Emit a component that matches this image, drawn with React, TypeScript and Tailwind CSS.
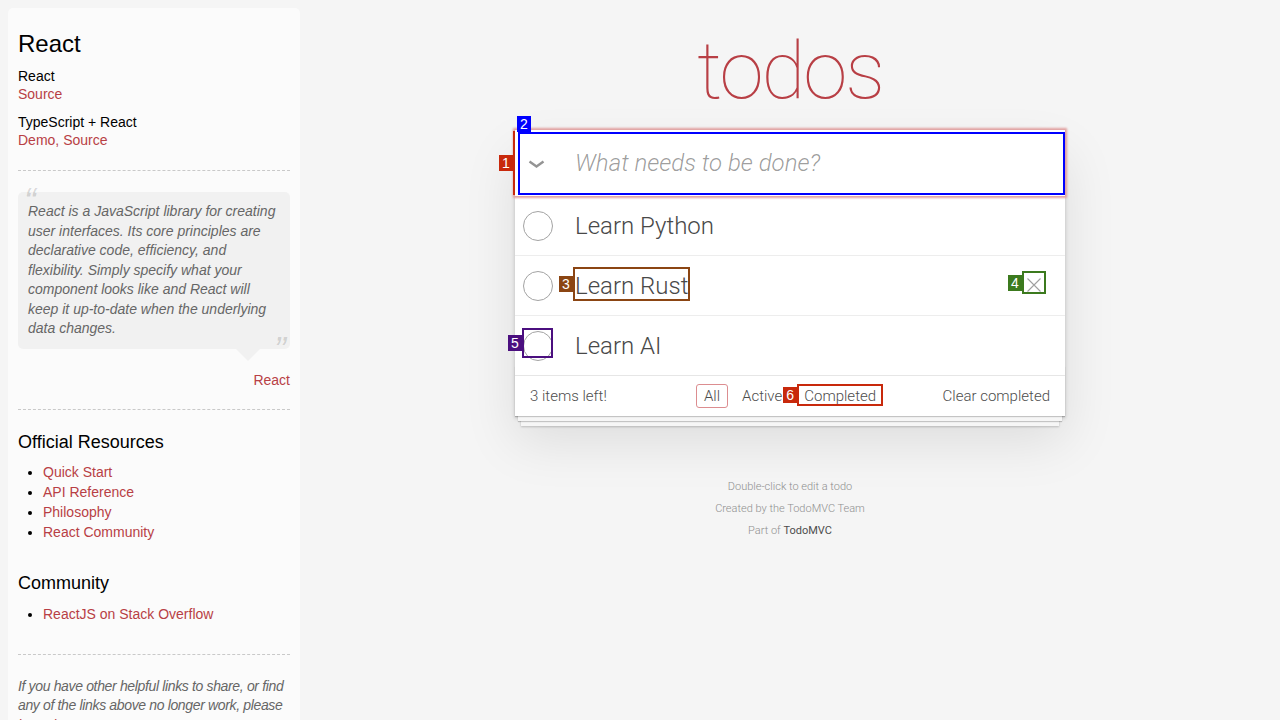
import React from "react";

type MarkProps = {
  n: number;
  box: string;
  tag: string;
  place: string;
  labelAt?: "left" | "top";
};

// numbered outline drawn over an element
const Mark = ({ n, box, tag, place, labelAt = "left" }: MarkProps) => (
  <div className={`pointer-events-none absolute z-10 ${box} ${place}`}>
    <span
      className={`absolute flex h-4 w-[14px] items-center justify-center font-['Liberation_Sans',sans-serif] text-[14px] font-normal leading-none text-white ${tag} ${
        labelAt === "top"
          ? "bottom-[calc(100%+2px)] -left-[3px]"
          : "right-[calc(100%+2px)] top-1/2 -translate-y-1/2"
      }`}
    >
      {n}
    </span>
  </div>
);

const todos = ["Learn Python", "Learn Rust", "Learn AI"];

const Sidebar = () => (
  <aside className="ml-2 mt-2 w-[292px] shrink-0 rounded-t-[5px] bg-white/60 px-[10px] pt-5 pb-10 font-['Liberation_Sans',sans-serif] text-[14px] leading-[18px] text-black">
    <h3 className="text-[24px] leading-[32px]">React</h3>
    <div className="mt-[7px]">
      <h5>React</h5>
      <a className="text-[#b83f45]">Source</a>
    </div>
    <div className="mt-[10px]">
      <h5>TypeScript + React</h5>
      <p className="text-[#b83f45]">
        <a>Demo</a>, <a>Source</a>
      </p>
    </div>
    <hr className="mt-[21px] border-dashed border-[#c9c9c9]" />

    <blockquote className="relative mt-[21px] rounded-[5px] bg-black/[0.04] px-[10px] py-[10px] text-[14px] italic leading-[19.5px] text-[#666]">
      <span className="absolute left-[6px] top-[-8px] text-[36px] leading-none text-black/15">“</span>
      React is a JavaScript library for creating user interfaces. Its core principles are declarative
      code, efficiency, and flexibility. Simply specify what your component looks like and React will
      keep it up-to-date when the underlying data changes.
      <span className="absolute bottom-[-20px] right-[4px] text-[36px] leading-none text-black/15">”</span>
      <span className="absolute right-[30px] top-full h-0 w-0 border-x-[12px] border-t-[12px] border-x-transparent border-t-black/[0.04]" />
    </blockquote>
    <p className="mt-[22px] text-right text-[#b83f45]">React</p>
    <hr className="mt-[20px] border-dashed border-[#c9c9c9]" />

    <h4 className="mt-[21px] text-[18px] leading-[22px]">Official Resources</h4>
    <ul className="mt-[9px] list-disc pl-[25px] leading-[20px] text-[#b83f45] marker:text-black">
      <li>Quick Start</li>
      <li>API Reference</li>
      <li>Philosophy</li>
      <li>React Community</li>
    </ul>

    <h4 className="mt-[30px] text-[18px] leading-[22px]">Community</h4>
    <ul className="mt-[10px] list-disc pl-[25px] leading-[20px] text-[#b83f45] marker:text-black">
      <li>ReactJS on Stack Overflow</li>
    </ul>
    <hr className="mt-[30px] border-dashed border-[#c9c9c9]" />

    <p className="mt-[22px] italic leading-[19.5px] tracking-[-0.35px] text-[#666]">
      If you have other helpful links to share, or find any of the links above no longer work, please{" "}
      <a className="text-[#b83f45]">let us know</a>.
    </p>
  </aside>
);

const TodoApp = () => (
  <main className="flex-1 font-['Roboto',sans-serif] font-light">
    <div className="mx-auto w-[550px]">
      <h1 className="pt-[31px] text-center text-[80px] font-thin leading-[80px] tracking-[-2px] text-[#b83f45]">
        todos
      </h1>

      <section className="relative mt-[19px] bg-white shadow-[0_2px_4px_0_rgba(0,0,0,0.2),0_25px_50px_0_rgba(0,0,0,0.1)]">
        <header className="relative h-[66px]">
          <input
            className="h-full w-full bg-transparent pl-[60px] pr-4 text-[24px] text-[#484848] shadow-[0_0_2px_2px_#e2a2a2] outline-none placeholder:italic placeholder:text-black/40"
            placeholder="What needs to be done?"
          />
          <svg
            className="pointer-events-none absolute left-[13px] top-[30px]"
            width="17"
            height="8"
            viewBox="0 0 17 8"
            fill="none"
          >
            <polyline points="1.5,1.5 8.5,6.5 15.5,1.5" stroke="#949494" strokeWidth="2.4" />
          </svg>
          <Mark n={1} box="border-l-2 border-[#c8290c]" tag="bg-[#c8290c]" place="-left-[2px] top-px bottom-px" />
          <Mark
            n={2}
            box="border-2 border-[#0000ff]"
            tag="bg-[#0000ff]"
            place="left-[3px] right-0 top-[2px] bottom-px"
            labelAt="top"
          />
        </header>

        <ul>
          {todos.map((t, i) => (
            <li
              key={t}
              className="relative flex h-[60px] items-center border-b border-[#ededed] text-[24px] text-[#484848] last:h-[59px] last:border-b-0"
            >
              <span className="relative ml-2 h-[30px] w-[30px] shrink-0 rounded-full border border-[#a3a3a3]">
                {i === 2 && (
                  <Mark
                    n={5}
                    box="border-2 border-[#4b0f7f]"
                    tag="bg-[#4b0f7f]"
                    place="-left-[2px] -top-[4px] w-[31px] h-[30px]"
                  />
                )}
              </span>
              <span className="relative ml-[22px] inline-block leading-[30px]">
                {t}
                {i === 1 && (
                  <Mark n={3} box="border-2 border-[#8b4513]" tag="bg-[#8b4513]" place="-left-0.5 -right-0.5 -top-1 bottom-0" />
                )}
              </span>
              {i === 1 && (
                <button className="relative ml-auto mr-[21px] mb-[6px] flex h-[19px] w-5 items-end justify-center">
                  <svg width="14" height="14" viewBox="0 0 14 14">
                    <path d="M0.5 0.5 L13.5 13.5 M13.5 0.5 L0.5 13.5" stroke="#a0a0a0" strokeWidth="1.1" />
                  </svg>
                  <Mark n={4} box="border-2 border-[#3c7a1e]" tag="bg-[#3c7a1e]" place="-inset-0.5" />
                </button>
              )}
            </li>
          ))}
        </ul>

        <footer className="relative grid h-[41px] grid-cols-[1fr_auto_1fr] items-center border-t border-[#e6e6e6] px-[15px] pb-px text-[15px] leading-[16px] text-[#4d4d4d]">
          <span className="pointer-events-none absolute inset-x-0 bottom-0 h-[50px] shadow-[0_1px_1px_rgba(0,0,0,0.2),0_8px_0_-3px_#f6f6f6,0_9px_1px_-3px_rgba(0,0,0,0.2),0_16px_0_-6px_#f6f6f6,0_17px_2px_-6px_rgba(0,0,0,0.2)]" />
          <span>3 items left!</span>
          <ul className="flex">
            <li>
              <a className="mx-[3px] block rounded-[3px] border border-[#dc8d90] px-[7px] py-[3px]">All</a>
            </li>
            <li>
              <a className="mx-[3px] block rounded-[3px] border border-transparent px-[7px] py-[3px]">Active</a>
            </li>
            <li>
              <a className="relative mx-[3px] block rounded-[3px] border border-transparent px-[7px] py-[3px]">
                Completed
                <Mark n={6} box="border-2 border-[#c8290c]" tag="bg-[#c8290c]" place="left-0 right-0 -top-px bottom-px" />
              </a>
            </li>
          </ul>
          <span className="justify-self-end">Clear completed</span>
        </footer>
      </section>

      <div className="mt-[60px] text-center text-[11px] leading-[22px] text-[#8f8f8f]">
        <p>Double-click to edit a todo</p>
        <p>Created by the TodoMVC Team</p>
        <p>
          Part of <a className="font-normal text-[#4d4d4d]">TodoMVC</a>
        </p>
      </div>
    </div>
  </main>
);

export default function App() {
  return (
    <div className="flex min-h-screen bg-[#f5f5f5]">
      <Sidebar />
      <TodoApp />
    </div>
  );
}
